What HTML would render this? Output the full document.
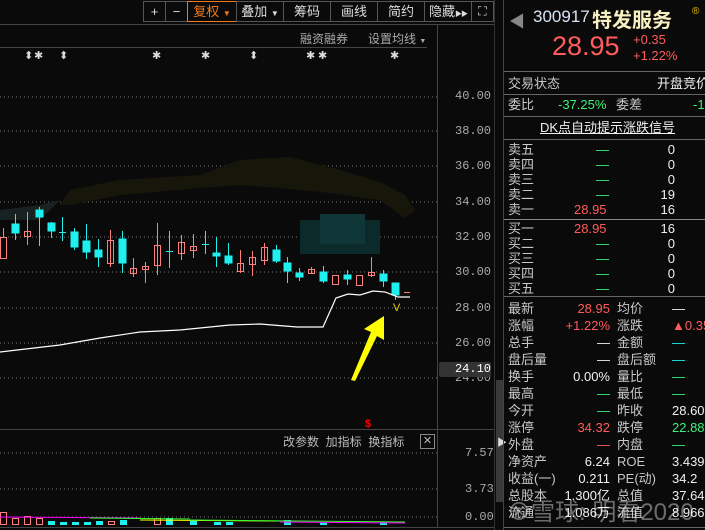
<!DOCTYPE html>
<html><head><meta charset="utf-8"><style>
body{margin:0;width:705px;height:530px;background:#0a0a0a;overflow:hidden;position:relative;font-family:"Liberation Sans","Noto Sans CJK SC",sans-serif;color:#c8c8c8}
.a{position:absolute;white-space:nowrap}
.btn{position:absolute;top:1px;height:21px;border:1px solid #555;box-sizing:border-box;color:#ddd;font-size:13px;line-height:19px;text-align:center;white-space:nowrap;overflow:hidden}
.r{font-size:13px;line-height:15px}
.lbl{color:#c8c8c8}
.red{color:#ff5c5c}.grn{color:#3cf07a}.wht{color:#f0f0f0}
.mono{font-family:"Liberation Mono","Noto Sans CJK SC",monospace}
</style></head><body>
<div class="btn" style="left:143px;width:23px">+</div>
<div class="btn" style="left:165px;width:23px">−</div>
<div class="btn" style="left:187px;width:50px;border-color:#f07a1a;color:#f07a1a">复权 <span style="font-size:8px">▼</span></div>
<div class="btn" style="left:236px;width:48px">叠加 <span style="font-size:8px">▼</span></div>
<div class="btn" style="left:283px;width:48px">筹码</div>
<div class="btn" style="left:330px;width:48px">画线</div>
<div class="btn" style="left:377px;width:48px">简约</div>
<div class="btn" style="left:424px;width:48px;text-align:left;padding-left:4px">隐藏<span style="font-size:7px;letter-spacing:-1px">▶▶</span></div>
<div class="btn" style="left:471px;width:23px;font-size:12px">⛶</div>
<div class="a" style="left:0;top:24px;width:494px;height:1px;background:#444"></div>
<div class="a" style="left:300px;top:30px;font-size:12px;color:#aaa">融资融券</div>
<div class="a" style="left:368px;top:30px;font-size:12px;color:#aaa">设置均线 <span style="font-size:7px">▼</span></div>
<div class="a" style="left:0;top:47px;width:427px;height:1px;background:#444"></div>
<svg class="a" style="left:0;top:0" width="500" height="530">
<g stroke="#777" stroke-dasharray="1,3" stroke-width="1">
<line x1="0" y1="97" x2="437" y2="97"/><line x1="0" y1="131" x2="437" y2="131"/><line x1="0" y1="166" x2="437" y2="166"/><line x1="0" y1="202" x2="437" y2="202"/><line x1="0" y1="237" x2="437" y2="237"/><line x1="0" y1="272" x2="437" y2="272"/><line x1="0" y1="308" x2="437" y2="308"/><line x1="0" y1="343" x2="437" y2="343"/><line x1="0" y1="378" x2="437" y2="378"/>
<line x1="0" y1="453" x2="437" y2="453"/><line x1="0" y1="489" x2="437" y2="489"/><line x1="0" y1="517" x2="437" y2="517"/>
</g>
<line x1="437.5" y1="25" x2="437.5" y2="528" stroke="#444"/>
<line x1="0" y1="429.5" x2="494" y2="429.5" stroke="#444"/>
<line x1="0" y1="527.5" x2="494" y2="527.5" stroke="#444"/>
<g fill="#ddd" font-size="11" font-family="DejaVu Sans">
<text x="24" y="59">⬍</text><text x="34" y="59">✱</text><text x="59" y="59">⬍</text><text x="152" y="59">✱</text><text x="201" y="59">✱</text><text x="249" y="59">⬍</text><text x="306" y="59">✱</text><text x="318" y="59">✱</text><text x="390" y="59">✱</text>
</g>
<path d="M60 205 L70 190 L120 180 L200 175 L240 160 L290 157 L340 170 L380 182 L405 195 L415 210 L405 218 L380 200 L330 193 L280 188 L240 185 L200 188 L120 195 L70 205Z" fill="#17160a"/>
<path d="M0 210 L40 205 L60 200 L40 220 L0 220Z" fill="#182220"/>
<rect x="300" y="220" width="80" height="34" fill="#0c2a2a"/>
<rect x="320" y="214" width="45" height="30" fill="#0f3636"/>
<g stroke="#ff7f7f" fill="none" stroke-width="1">
<line x1="3.5" y1="228" x2="3.5" y2="237"/><rect x="0.5" y="237.5" width="6" height="21"/>
<line x1="27.5" y1="212" x2="27.5" y2="245"/><rect x="24.5" y="231.5" width="6" height="5"/>
<line x1="110.5" y1="230" x2="110.5" y2="267"/><rect x="107.5" y="240.5" width="6" height="23"/>
<line x1="133.5" y1="258" x2="133.5" y2="277"/><rect x="130.5" y="268.5" width="6" height="5"/>
<line x1="145.5" y1="262" x2="145.5" y2="283"/><rect x="142.5" y="266.5" width="6" height="3"/>
<line x1="157.5" y1="223" x2="157.5" y2="275"/><rect x="154.5" y="245.5" width="6" height="20"/>
<line x1="181.5" y1="235" x2="181.5" y2="260"/><rect x="178.5" y="242.5" width="6" height="11"/>
<line x1="193.5" y1="234" x2="193.5" y2="258"/><rect x="190.5" y="246.5" width="6" height="4"/>
<line x1="240.5" y1="250" x2="240.5" y2="273"/><rect x="237.5" y="263.5" width="6" height="8"/>
<line x1="252.5" y1="251" x2="252.5" y2="276"/><rect x="249.5" y="257.5" width="6" height="7"/>
<line x1="264.5" y1="243" x2="264.5" y2="265"/><rect x="261.5" y="247.5" width="6" height="13"/>
<line x1="311.5" y1="267" x2="311.5" y2="274"/><rect x="308.5" y="269.5" width="6" height="4"/>
<rect x="332.5" y="275.5" width="6" height="9"/>
<rect x="356.5" y="275.5" width="6" height="10"/>
<line x1="371.5" y1="257" x2="371.5" y2="277"/><rect x="368.5" y="272.5" width="6" height="3"/>
<line x1="404" y1="292.5" x2="410" y2="292.5"/>
</g>
<g fill="#1ef0f0" stroke="#1ef0f0">
<line x1="15.5" y1="214" x2="15.5" y2="240"/><rect x="12" y="224" width="7" height="9"/>
<line x1="39.5" y1="207" x2="39.5" y2="246"/><rect x="36" y="210" width="7" height="7"/>
<line x1="51.5" y1="222" x2="51.5" y2="238"/><rect x="48" y="223" width="7" height="8"/>
<line x1="62.5" y1="217" x2="62.5" y2="241"/><line x1="59" y1="232.5" x2="66" y2="232.5"/>
<line x1="74.5" y1="228" x2="74.5" y2="250"/><rect x="71" y="232" width="7" height="15"/>
<line x1="86.5" y1="224" x2="86.5" y2="259"/><rect x="83" y="241" width="7" height="11"/>
<line x1="98.5" y1="239" x2="98.5" y2="267"/><rect x="95" y="250" width="7" height="7"/>
<line x1="122.5" y1="231" x2="122.5" y2="273"/><rect x="119" y="239" width="7" height="24"/>
<line x1="169.5" y1="231" x2="169.5" y2="268"/><line x1="166" y1="251.5" x2="173" y2="251.5"/>
<line x1="205.5" y1="231" x2="205.5" y2="254"/><line x1="202" y1="244.5" x2="209" y2="244.5"/>
<line x1="216.5" y1="237" x2="216.5" y2="267"/><rect x="213" y="253" width="7" height="3"/>
<line x1="228.5" y1="243" x2="228.5" y2="265"/><rect x="225" y="256" width="7" height="7"/>
<line x1="276.5" y1="245" x2="276.5" y2="263"/><rect x="273" y="250" width="7" height="11"/>
<line x1="287.5" y1="257" x2="287.5" y2="283"/><rect x="284" y="263" width="7" height="8"/>
<line x1="299.5" y1="268" x2="299.5" y2="281"/><rect x="296" y="273" width="7" height="4"/>
<line x1="323.5" y1="266" x2="323.5" y2="283"/><rect x="320" y="272" width="7" height="9"/>
<line x1="347.5" y1="270" x2="347.5" y2="285"/><rect x="344" y="275" width="7" height="4"/>
<line x1="383.5" y1="270" x2="383.5" y2="287"/><rect x="380" y="274" width="7" height="7"/>
<line x1="395.5" y1="283" x2="395.5" y2="300"/><rect x="392" y="283" width="7" height="12"/>
</g>
<polyline points="0,352 60,345 100,338 140,332 180,330 230,325 260,324 297,327 323,327 336,298 348,294 360,295 373,291 385,292 398,297 410,297" fill="none" stroke="#fff" stroke-width="1.2"/>
<text x="393" y="311" fill="#e0d000" font-size="11" font-family="Liberation Sans">V</text>
<path d="M351 380 L371 332 L364 329 L384 316 L384 340 L377 336 L355 381Z" fill="#ffff00"/>
<text x="365" y="427" fill="#f00" font-size="11" font-weight="bold" font-family="Liberation Sans">$</text>
<g fill="none" stroke="#ff7f7f"><rect x="0.5" y="512.5" width="6" height="12"/><rect x="12.5" y="518.5" width="6" height="6"/><rect x="24.5" y="516.5" width="6" height="8"/><rect x="36.5" y="518.5" width="6" height="6"/><rect x="108.5" y="521.5" width="6" height="3"/><rect x="154.5" y="518.5" width="6" height="6"/></g>
<g fill="#1ef0f0"><rect x="48" y="521" width="7" height="4"/><rect x="60" y="522" width="7" height="3"/><rect x="72" y="522" width="7" height="3"/><rect x="84" y="522" width="7" height="3"/><rect x="96" y="521" width="7" height="4"/><rect x="120" y="520" width="7" height="5"/><rect x="166" y="518" width="7" height="7"/><rect x="190" y="521" width="7" height="4"/><rect x="214" y="522" width="7" height="3"/><rect x="226" y="522" width="7" height="3"/><rect x="284" y="520" width="7" height="5"/><rect x="320" y="522" width="7" height="3"/><rect x="380" y="522" width="7" height="3"/></g>
<line x1="0" y1="517" x2="140" y2="518" stroke="#f0f" stroke-width="1"/><line x1="90" y1="518" x2="190" y2="519" stroke="#3f3"/><line x1="140" y1="520" x2="280" y2="521" stroke="#ff0"/><line x1="190" y1="520" x2="405" y2="522" stroke="#3f3"/><line x1="280" y1="522" x2="405" y2="523" stroke="#f0f"/>
</svg>
<div class="a mono" style="left:455px;top:89px;font-size:12px;color:#aaa;line-height:14px">40.00</div>
<div class="a mono" style="left:455px;top:124px;font-size:12px;color:#aaa">38.00</div>
<div class="a mono" style="left:455px;top:159px;font-size:12px;color:#aaa">36.00</div>
<div class="a mono" style="left:455px;top:195px;font-size:12px;color:#aaa">34.00</div>
<div class="a mono" style="left:455px;top:230px;font-size:12px;color:#aaa">32.00</div>
<div class="a mono" style="left:455px;top:265px;font-size:12px;color:#aaa">30.00</div>
<div class="a mono" style="left:455px;top:301px;font-size:12px;color:#aaa">28.00</div>
<div class="a mono" style="left:455px;top:336px;font-size:12px;color:#aaa">26.00</div>
<div class="a mono" style="left:455px;top:371px;font-size:12px;color:#aaa">24.00</div>
<div class="a mono" style="left:439px;top:362px;width:52px;height:15px;background:#333;border-radius:2px;color:#fff;font-size:12px;line-height:15px;text-align:right">24.10</div>
<div class="a" style="left:283px;top:433px;font-size:12px;color:#bbb">改参数 &nbsp;加指标 &nbsp;换指标</div>
<div class="a" style="left:420px;top:434px;width:13px;height:13px;border:1px solid #888;color:#bbb;font-size:11px;line-height:13px;text-align:center">✕</div>
<div class="a mono" style="left:465px;top:446px;font-size:12px;color:#aaa">7.57</div>
<div class="a mono" style="left:465px;top:482px;font-size:12px;color:#aaa">3.73</div>
<div class="a mono" style="left:465px;top:510px;font-size:12px;color:#aaa">0.00</div>
<div class="a" style="left:494px;top:0;width:1px;height:530px;background:#333"></div>
<div class="a" style="left:496px;top:380px;width:7px;height:122px;background:#3a3a3a"></div>
<div class="a" style="left:497px;top:434px;font-size:10px;color:#ddd">▶</div>
<div class="a" style="left:503px;top:0;width:1px;height:530px;background:#444"></div>
<div class="a" style="left:509px;top:8px;font-size:16px;color:#888">◀</div>
<div class="a" style="left:533px;top:7px;font-size:17px;color:#d8e4f8">300917</div>
<div class="a" style="left:592px;top:4px;font-size:20px;font-weight:bold;color:#f8f0c0">特发服务</div>
<div class="a" style="left:692px;top:6px;font-size:10px;color:#e8c000">®</div>
<div class="a" style="left:552px;top:31px;font-size:27px;color:#ff5c5c">28.95</div>
<div class="a" style="left:633px;top:32px;font-size:13px;color:#ff5c5c;line-height:16px">+0.35<br>+1.22%</div>
<div class="a" style="left:504px;top:71px;width:201px;height:1px;background:#666"></div>
<div class="a r lbl" style="left:508px;top:76px">交易状态</div><div class="a r wht" style="left:657px;top:76px">开盘竞价</div>
<div class="a" style="left:504px;top:94px;width:201px;height:1px;background:#666"></div>
<div class="a r lbl" style="left:508px;top:97px">委比</div><div class="a r grn" style="left:558px;top:97px">-37.25%</div><div class="a r lbl" style="left:616px;top:97px">委差</div><div class="a r grn" style="left:693px;top:97px">-1</div>
<div class="a" style="left:504px;top:116px;width:201px;height:1px;background:#666"></div>
<div class="a r wht" style="left:540px;top:120px;text-decoration:underline">DK点自动提示涨跌信号</div>
<div class="a" style="left:504px;top:139px;width:201px;height:1px;background:#666"></div>
<div class="a r lbl" style="left:508px;top:142px;line-height:15px">卖五<br>卖四<br>卖三<br>卖二<br>卖一</div>
<div class="a r grn" style="left:596px;top:142px;line-height:15px">—<br>—<br>—<br>—</div>
<div class="a r red" style="left:574px;top:202px">28.95</div>
<div class="a r wht" style="left:660px;top:142px;line-height:15px;text-align:right;width:15px">0<br>0<br>0<br>19<br>16</div>
<div class="a" style="left:504px;top:219px;width:201px;height:1px;background:#888"></div>
<div class="a r lbl" style="left:508px;top:221px;line-height:15px">买一<br>买二<br>买三<br>买四<br>买五</div>
<div class="a r red" style="left:574px;top:221px">28.95</div>
<div class="a r grn" style="left:596px;top:236px;line-height:15px">—<br>—<br>—<br>—</div>
<div class="a r wht" style="left:660px;top:221px;line-height:15px;text-align:right;width:15px">16<br>0<br>0<br>0<br>0</div>
<div class="a" style="left:504px;top:296px;width:201px;height:1px;background:#666"></div>
<div class="a r lbl" style="left:508px;top:300px;line-height:17px">最新<br>涨幅<br>总手<br>盘后量<br>换手<br>最高<br>今开<br>涨停<br>外盘<br>净资产<br>收益(一)<br>总股本<br>流通</div>
<div class="a r" style="left:540px;top:300px;line-height:17px;width:70px;text-align:right"><span class="red">28.95</span><br><span class="red">+1.22%</span><br><span class="wht">—</span><br><span class="wht">—</span><br><span class="wht">0.00%</span><br><span class="grn">—</span><br><span class="grn">—</span><br><span class="red">34.32</span><br><span class="red">—</span><br><span class="wht">6.24</span><br><span class="wht">0.211</span><br><span class="wht">1.300亿</span><br><span class="wht">1.086万</span></div>
<div class="a r lbl" style="left:617px;top:300px;line-height:17px">均价<br>涨跌<br>金额<br>盘后额<br>量比<br>最低<br>昨收<br>跌停<br>内盘<br>ROE<br>PE(动)<br>总值<br>流值</div>
<div class="a r" style="left:672px;top:300px;line-height:17px"><span class="wht">—</span><br><span class="red">▲0.35</span><br><span style="color:#1ef0f0">—</span><br><span style="color:#1ef0f0">—</span><br><span class="grn">—</span><br><span class="grn">—</span><br><span class="wht">28.60</span><br><span class="grn">22.88</span><br><span class="grn">—</span><br><span class="wht">3.439</span><br><span class="wht">34.2</span><br><span class="wht">37.64亿</span><br><span class="wht">8.966亿</span></div>
<div class="a" style="left:504px;top:527px;width:201px;height:1px;background:#666"></div>
<div class="a" style="left:507px;top:492px;font-size:24px;color:rgba(255,255,255,0.4)">⊗雪球: 明看2020</div>
</body></html>
